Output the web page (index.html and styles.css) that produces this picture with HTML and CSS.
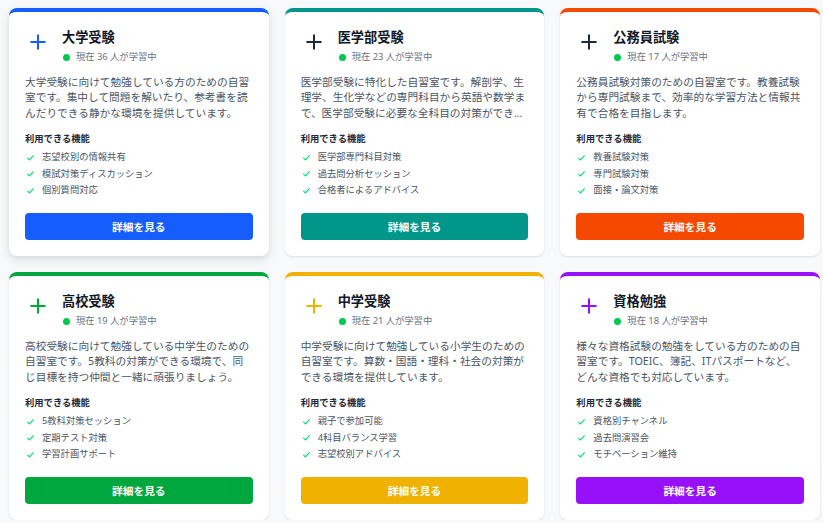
FILE: index.html
```html
<!DOCTYPE html>
<html lang="ja">
<head>
  <meta charset="UTF-8">
  <meta name="viewport" content="width=device-width, initial-scale=1.0">
  <title>自習室一覧</title>
  <link rel="stylesheet" href="styles.css">
</head>
<body>
  <div class="rooms">

    <div class="card blue hovered">
      <div class="card-head">
        <span class="card-icon"><svg viewBox="0 0 24 24"><path d="M12 5v14M5 12h14"/></svg></span>
        <div>
          <h2>大学受験</h2>
          <div class="status"><span class="dot"></span>現在 36 人が学習中</div>
        </div>
      </div>
      <p class="desc">大学受験に向けて勉強している方のための自習室です。集中して問題を解いたり、参考書を読んだりできる静かな環境を提供しています。</p>
      <h3>利用できる機能</h3>
      <ul class="features">
        <li><svg viewBox="0 0 10 10"><path d="M1.5 5.5l2.3 2.2 4.7-5"/></svg>志望校別の情報共有</li>
        <li><svg viewBox="0 0 10 10"><path d="M1.5 5.5l2.3 2.2 4.7-5"/></svg>模試対策ディスカッション</li>
        <li><svg viewBox="0 0 10 10"><path d="M1.5 5.5l2.3 2.2 4.7-5"/></svg>個別質問対応</li>
      </ul>
      <button>詳細を見る</button>
    </div>

    <div class="card teal">
      <div class="card-head">
        <span class="card-icon"><svg viewBox="0 0 24 24"><path d="M12 5v14M5 12h14"/></svg></span>
        <div>
          <h2>医学部受験</h2>
          <div class="status"><span class="dot"></span>現在 23 人が学習中</div>
        </div>
      </div>
      <p class="desc">医学部受験に特化した自習室です。解剖学、生理学、生化学などの専門科目から英語や数学まで、医学部受験に必要な全科目の対策ができる環境を整えています。</p>
      <h3>利用できる機能</h3>
      <ul class="features">
        <li><svg viewBox="0 0 10 10"><path d="M1.5 5.5l2.3 2.2 4.7-5"/></svg>医学部専門科目対策</li>
        <li><svg viewBox="0 0 10 10"><path d="M1.5 5.5l2.3 2.2 4.7-5"/></svg>過去問分析セッション</li>
        <li><svg viewBox="0 0 10 10"><path d="M1.5 5.5l2.3 2.2 4.7-5"/></svg>合格者によるアドバイス</li>
      </ul>
      <button>詳細を見る</button>
    </div>

    <div class="card orange">
      <div class="card-head">
        <span class="card-icon"><svg viewBox="0 0 24 24"><path d="M12 5v14M5 12h14"/></svg></span>
        <div>
          <h2>公務員試験</h2>
          <div class="status"><span class="dot"></span>現在 17 人が学習中</div>
        </div>
      </div>
      <p class="desc">公務員試験対策のための自習室です。教養試験から専門試験まで、効率的な学習方法と情報共有で合格を目指します。</p>
      <h3>利用できる機能</h3>
      <ul class="features">
        <li><svg viewBox="0 0 10 10"><path d="M1.5 5.5l2.3 2.2 4.7-5"/></svg>教養試験対策</li>
        <li><svg viewBox="0 0 10 10"><path d="M1.5 5.5l2.3 2.2 4.7-5"/></svg>専門試験対策</li>
        <li><svg viewBox="0 0 10 10"><path d="M1.5 5.5l2.3 2.2 4.7-5"/></svg>面接・論文対策</li>
      </ul>
      <button>詳細を見る</button>
    </div>

    <div class="card green">
      <div class="card-head">
        <span class="card-icon"><svg viewBox="0 0 24 24"><path d="M12 5v14M5 12h14"/></svg></span>
        <div>
          <h2>高校受験</h2>
          <div class="status"><span class="dot"></span>現在 19 人が学習中</div>
        </div>
      </div>
      <p class="desc">高校受験に向けて勉強している中学生のための自習室です。5教科の対策ができる環境で、同じ目標を持つ仲間と一緒に頑張りましょう。</p>
      <h3>利用できる機能</h3>
      <ul class="features">
        <li><svg viewBox="0 0 10 10"><path d="M1.5 5.5l2.3 2.2 4.7-5"/></svg>5教科対策セッション</li>
        <li><svg viewBox="0 0 10 10"><path d="M1.5 5.5l2.3 2.2 4.7-5"/></svg>定期テスト対策</li>
        <li><svg viewBox="0 0 10 10"><path d="M1.5 5.5l2.3 2.2 4.7-5"/></svg>学習計画サポート</li>
      </ul>
      <button>詳細を見る</button>
    </div>

    <div class="card amber">
      <div class="card-head">
        <span class="card-icon"><svg viewBox="0 0 24 24"><path d="M12 5v14M5 12h14"/></svg></span>
        <div>
          <h2>中学受験</h2>
          <div class="status"><span class="dot"></span>現在 21 人が学習中</div>
        </div>
      </div>
      <p class="desc">中学受験に向けて勉強している小学生のための自習室です。算数・国語・理科・社会の対策ができる環境を提供しています。</p>
      <h3>利用できる機能</h3>
      <ul class="features">
        <li><svg viewBox="0 0 10 10"><path d="M1.5 5.5l2.3 2.2 4.7-5"/></svg>親子で参加可能</li>
        <li><svg viewBox="0 0 10 10"><path d="M1.5 5.5l2.3 2.2 4.7-5"/></svg>4科目バランス学習</li>
        <li><svg viewBox="0 0 10 10"><path d="M1.5 5.5l2.3 2.2 4.7-5"/></svg>志望校別アドバイス</li>
      </ul>
      <button>詳細を見る</button>
    </div>

    <div class="card purple">
      <div class="card-head">
        <span class="card-icon"><svg viewBox="0 0 24 24"><path d="M12 5v14M5 12h14"/></svg></span>
        <div>
          <h2>資格勉強</h2>
          <div class="status"><span class="dot"></span>現在 18 人が学習中</div>
        </div>
      </div>
      <p class="desc">様々な資格試験の勉強をしている方のための自習室です。TOEIC、簿記、ITパスポートなど、どんな資格でも対応しています。</p>
      <h3>利用できる機能</h3>
      <ul class="features">
        <li><svg viewBox="0 0 10 10"><path d="M1.5 5.5l2.3 2.2 4.7-5"/></svg>資格別チャンネル</li>
        <li><svg viewBox="0 0 10 10"><path d="M1.5 5.5l2.3 2.2 4.7-5"/></svg>過去問演習会</li>
        <li><svg viewBox="0 0 10 10"><path d="M1.5 5.5l2.3 2.2 4.7-5"/></svg>モチベーション維持</li>
      </ul>
      <button>詳細を見る</button>
    </div>

  </div>
</body>
</html>
```

FILE: styles.css
```css
* {
  box-sizing: border-box;
}
body {
  font-family: "Noto Sans", "Noto Sans CJK JP", sans-serif;
  background-color: #f8f9fb;
  margin: 0;
  padding: 8px 3px 0 9px;
}
.rooms {
  display: grid;
  grid-template-columns: repeat(3, 1fr);
  gap: 16px;
}
.card {
  --accent: #155dfc;
  --icon: #1e2939;
  display: flex;
  flex-direction: column;
  background-color: white;
  border-top: 4px solid var(--accent);
  border-radius: 8px;
  padding: 16px 16px 16px;
  box-shadow: 0 1px 3px rgba(0, 0, 0, 0.08), 0 1px 2px rgba(0, 0, 0, 0.04);
}
.card.hovered {
  box-shadow: 0 4px 12px rgba(0, 0, 0, 0.1), 0 2px 4px rgba(0, 0, 0, 0.05);
}
.blue   { --accent: #155dfc; --icon: #155dfc; }
.teal   { --accent: #009689; }
.orange { --accent: #f54900; }
.green  { --accent: #00a63e; --icon: #00a63e; }
.amber  { --accent: #f0b100; --icon: #f0b100; }
.purple { --accent: #9810fa; --icon: #9810fa; }

.card-head {
  display: flex;
  align-items: flex-start;
  gap: 11px;
}
.card-icon {
  width: 26px;
  height: 26px;
  margin-top: 1px;
  flex-shrink: 0;
}
.card-icon svg {
  width: 26px;
  height: 26px;
  fill: none;
  stroke: var(--icon);
  stroke-width: 1.9;
}
h2 {
  margin: 0;
  font-size: 13.2px;
  line-height: 18px;
  font-weight: 700;
  color: #101828;
}
.status {
  display: flex;
  align-items: center;
  margin-top: 4px;
  font-size: 9.3px;
  line-height: 14px;
  color: #6a7282;
}
.dot {
  width: 7px;
  height: 7px;
  border-radius: 50%;
  background-color: #00c950;
  margin: 0 6px 0 1px;
}
.desc {
  margin: 10.75px 0 0;
  font-size: 10.7px;
  line-height: 15.5px;
  height: 46.5px;
  color: #4a5565;
  display: -webkit-box;
  -webkit-line-clamp: 3;
  -webkit-box-orient: vertical;
  overflow: hidden;
}
h3 {
  margin: 10.75px 0 0;
  font-size: 9.3px;
  line-height: 14px;
  font-weight: 600;
  color: #1e2939;
}
.features {
  list-style: none;
  margin: 4px 0 0;
  padding: 0;
  display: flex;
  flex-direction: column;
  gap: 2.5px;
}
.features li {
  display: flex;
  align-items: center;
  font-size: 9.3px;
  line-height: 14px;
  color: #4a5565;
}
.features svg {
  width: 9px;
  height: 9px;
  margin: 0 7px 0 1px;
  fill: none;
  stroke: #05df72;
  stroke-width: 1.3;
}
button {
  margin-top: 16px;
  height: 27px;
  border: none;
  border-radius: 4px;
  background-color: var(--accent);
  color: white;
  font-family: inherit;
  font-size: 10.7px;
  font-weight: 700;
  cursor: pointer;
}
```
